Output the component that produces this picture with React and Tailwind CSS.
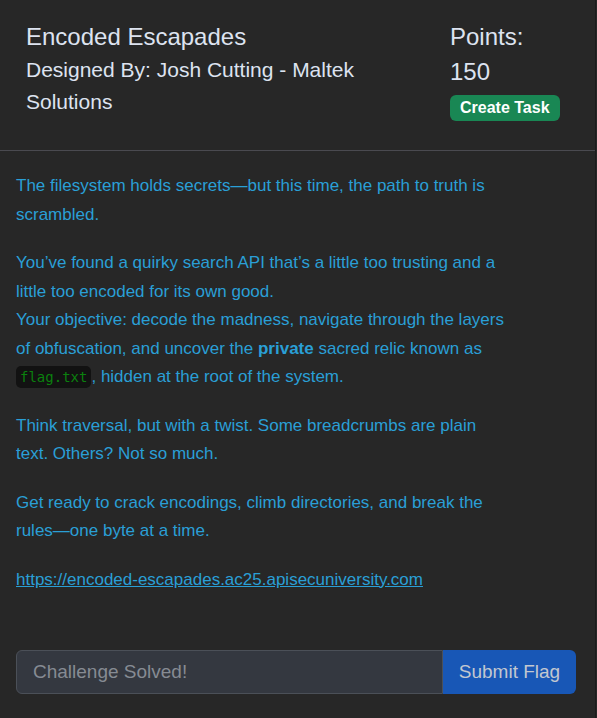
export default function App() {
  return (
    <div
      className="min-h-[718px] w-[597px] bg-[#272727]"
      style={{ fontFamily: '"Liberation Sans", Arial, sans-serif' }}
    >
      <div className="min-h-[718px] w-[596px] border-r border-[#1c1c1c]">
        {/* header */}
        <div className="flex border-b border-[#4a4a50] pb-[29px] pt-[20px]">
          <div className="w-[425px] pl-[26px] pr-[10px]">
            <h1 className="text-[24px] leading-[33px] text-[#dde3f0]">Encoded Escapades</h1>
            <p className="mt-[1px] text-[21px] leading-[32px] text-[#dde3f0]">
              Designed By: Josh Cutting - Maltek Solutions
            </p>
          </div>
          <div className="pl-[25px]">
            <p className="text-[24px] leading-[33px] text-[#dde3f0]">Points:</p>
            <p className="text-[24px] leading-[37px] text-[#dde3f0]">150</p>
            <span className="mt-[5px] inline-block rounded-[6px] bg-[#198754] px-[10px] text-[16px] font-bold leading-[26px] text-white">
              Create Task
            </span>
          </div>
        </div>

        {/* description */}
        <div className="w-[506px] pl-[16px] pt-[21px] text-[17px] leading-[28.5px] text-[#2a9fd6]">
          <p className="mb-[20px]">The filesystem holds secrets—but this time, the path to truth is scrambled.</p>
          <p className="mb-[20px]">
            You’ve found a quirky search API that’s a little too trusting and a little too encoded for its own good.
            <br />
            Your objective: decode the madness, navigate through the layers of obfuscation, and uncover the{' '}
            <strong className="font-bold">private</strong> sacred relic known as{' '}
            <code
              className="rounded-[5px] bg-[#121212] px-[4px] py-[3px] text-[14px] text-[#0b800e]"
              style={{ fontFamily: '"DejaVu Sans Mono", "Liberation Mono", monospace' }}
            >
              flag.txt
            </code>
            , hidden at the root of the system.
          </p>
          <p className="mb-[20px]">Think traversal, but with a twist. Some breadcrumbs are plain text. Others? Not so much.</p>
          <p className="mb-[20px]">Get ready to crack encodings, climb directories, and break the rules—one byte at a time.</p>
          <p>
            <a href="#" className="underline">https://encoded-escapades.ac25.apisecuniversity.com</a>
          </p>
        </div>

        {/* flag form */}
        <div className="flex px-[16px] pt-[56px]">
          <input
            type="text"
            placeholder="Challenge Solved!"
            className="h-[44px] w-[427px] rounded-l-[6px] border border-[#4b5058] bg-[#343840] px-[16px] text-[19px] text-[#c8ccd4] outline-none placeholder:text-[#868b93]"
          />
          <button className="h-[44px] w-[133px] rounded-r-[6px] bg-[#1857b6] text-[19px] text-[#c2c7d0]">
            Submit Flag
          </button>
        </div>
      </div>
    </div>
  );
}
